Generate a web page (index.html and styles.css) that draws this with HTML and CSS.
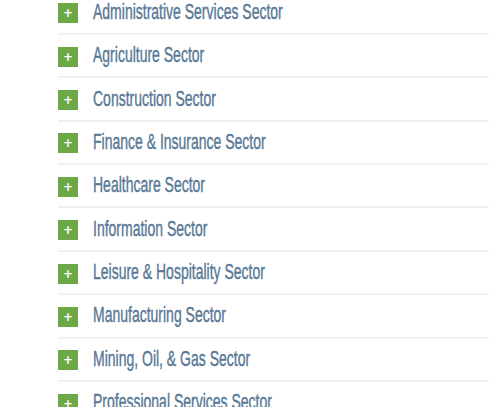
FILE: index.html
```html
<!DOCTYPE html>
<html lang="en">
<head>
  <meta charset="UTF-8">
  <meta name="viewport" content="width=device-width, initial-scale=1.0">
  <title>Sectors</title>
  <link rel="stylesheet" href="styles.css">
</head>
<body>
  <ul class="sector-list">
    <li class="sector"><span class="toggle">+</span><span class="sector-name">Administrative Services Sector</span></li>
    <li class="sector"><span class="toggle">+</span><span class="sector-name">Agriculture Sector</span></li>
    <li class="sector"><span class="toggle">+</span><span class="sector-name">Construction Sector</span></li>
    <li class="sector"><span class="toggle">+</span><span class="sector-name">Finance &amp; Insurance Sector</span></li>
    <li class="sector"><span class="toggle">+</span><span class="sector-name">Healthcare Sector</span></li>
    <li class="sector"><span class="toggle">+</span><span class="sector-name">Information Sector</span></li>
    <li class="sector"><span class="toggle">+</span><span class="sector-name">Leisure &amp; Hospitality Sector</span></li>
    <li class="sector"><span class="toggle">+</span><span class="sector-name">Manufacturing Sector</span></li>
    <li class="sector"><span class="toggle">+</span><span class="sector-name">Mining, Oil, &amp; Gas Sector</span></li>
    <li class="sector"><span class="toggle">+</span><span class="sector-name">Professional Services Sector</span></li>
  </ul>
</body>
</html>
```

FILE: styles.css
```css
html, body {
  height: 100%;
}
body {
  margin: 0;
  background: #fff;
  overflow: hidden;
  font-family: 'Liberation Sans', sans-serif;
}
.sector-list {
  list-style: none;
  margin: -8.4px 0 0 58px;
  padding: 0;
}
.sector {
  display: flex;
  align-items: center;
  gap: 15px;
  height: 43.375px;
  box-sizing: border-box;
  border-bottom: 2px solid #f1f1f1;
}
.toggle {
  display: flex;
  align-items: center;
  justify-content: center;
  flex: none;
  width: 20px;
  height: 20px;
  margin-top: 2px;
  background: #6ca846;
  color: #fff;
  font-family: 'DejaVu Sans', sans-serif;
  font-size: 12px;
  font-weight: bold;
}
.sector-name {
  display: inline-block;
  margin-bottom: 1px;
  color: #587896;
  font-size: 22px;
  white-space: nowrap;
  transform: scaleX(0.636);
  transform-origin: left center;
  -webkit-text-stroke: 0.4px #587896;
}
```
